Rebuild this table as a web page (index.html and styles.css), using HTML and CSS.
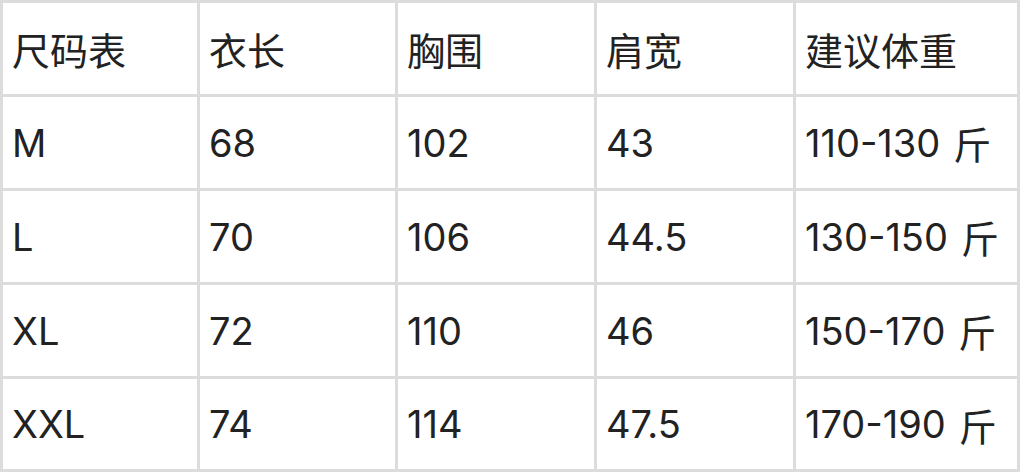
FILE: index.html
```html
<!DOCTYPE html>
<html lang="zh-CN">
<head>
<meta charset="utf-8">
<title>尺码表</title>
<link rel="stylesheet" href="styles.css">
</head>
<body>
<div class="size-table">
  <div class="cell">尺码表</div><div class="cell">衣长</div><div class="cell">胸围</div><div class="cell">肩宽</div><div class="cell">建议体重</div>
  <div class="cell">M</div><div class="cell">68</div><div class="cell">102</div><div class="cell">43</div><div class="cell">110-130<span class="unit">斤</span></div>
  <div class="cell">L</div><div class="cell">70</div><div class="cell">106</div><div class="cell">44.5</div><div class="cell">130-150<span class="unit">斤</span></div>
  <div class="cell">XL</div><div class="cell">72</div><div class="cell">110</div><div class="cell">46</div><div class="cell">150-170<span class="unit">斤</span></div>
  <div class="cell">XXL</div><div class="cell">74</div><div class="cell">114</div><div class="cell">47.5</div><div class="cell">170-190<span class="unit">斤</span></div>
</div>
</body>
</html>
```
FILE: styles.css
```css
html, body {
  margin: 0;
  padding: 0;
  background: #ffffff;
}
.size-table {
  width: 1020px;
  height: 472px;
  box-sizing: border-box;
  display: grid;
  grid-template-columns: 194px 195px 196px 196px 221px;
  grid-template-rows: 91px 91px 91px 91px 90px;
  gap: 3px;
  padding: 3px;
  background: #dcdcdc;
  font-family: Inter, "Noto Sans CJK SC", sans-serif;
  font-size: 38px;
  color: #222222;
}
.cell {
  background: #ffffff;
  display: flex;
  align-items: center;
  padding-left: 9px;
  white-space: nowrap;
}
.unit {
  margin-left: 13px;
}
```
